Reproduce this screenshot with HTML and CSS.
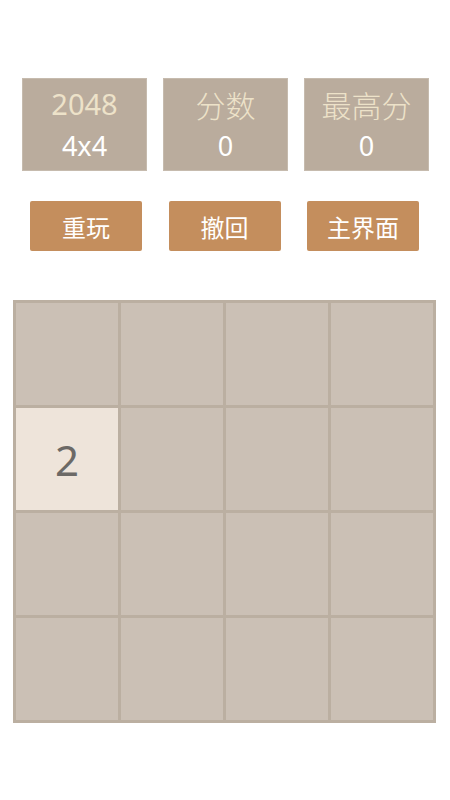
FILE: index.html
```html
<!DOCTYPE html>
<html lang="zh">
<head>
<meta charset="utf-8">
<link rel="stylesheet" href="styles.css">
</head>
<body>
<div class="page">
  <div class="scores">
    <div class="box"><div class="label num">2048</div><div class="value">4x4</div></div>
    <div class="box"><div class="label">分数</div><div class="value">0</div></div>
    <div class="box"><div class="label">最高分</div><div class="value">0</div></div>
  </div>
  <div class="buttons">
    <div class="btn">重玩</div>
    <div class="btn">撤回</div>
    <div class="btn">主界面</div>
  </div>
  <div class="board">
    <div class="cell"></div><div class="cell"></div><div class="cell"></div><div class="cell"></div>
    <div class="cell tile2">2</div><div class="cell"></div><div class="cell"></div><div class="cell"></div>
    <div class="cell"></div><div class="cell"></div><div class="cell"></div><div class="cell"></div>
    <div class="cell"></div><div class="cell"></div><div class="cell"></div><div class="cell"></div>
  </div>
</div>
</body>
</html>
```
FILE: styles.css
```css
html, body {
  margin: 0;
  padding: 0;
  background: #ffffff;
}
.page {
  width: 450px;
  height: 800px;
  display: flex;
  flex-direction: column;
  font-family: "Noto Sans", "Noto Sans CJK SC", sans-serif;
}
.scores {
  margin-top: 78px;
  margin-left: 22px;
  display: flex;
  gap: 16px;
}
.box {
  width: 125px;
  height: 93px;
  box-sizing: border-box;
  background: #baac9d;
  border: 1px solid #c6bbae;
  display: flex;
  flex-direction: column;
  align-items: center;
}
.label {
  color: #ede2c9;
  font-size: 30px;
  line-height: 34px;
  margin-top: 8px;
  font-family: "Noto Sans CJK SC", sans-serif;
  font-weight: 300;
}
.label.num {
  font-family: "Noto Sans", sans-serif;
  font-size: 29px;
  font-weight: 400;
}
.value {
  color: #ffffff;
  font-size: 27px;
  line-height: 30px;
  margin-top: 10px;
  font-family: "Noto Sans", sans-serif;
}
.buttons {
  margin-top: 30px;
  margin-left: 30px;
  display: flex;
  gap: 26.5px;
}
.btn {
  width: 112px;
  height: 50px;
  background: #c48e5d;
  border-radius: 2px;
  color: #ffffff;
  font-family: "Noto Sans CJK SC", sans-serif;
  font-size: 24px;
  display: flex;
  align-items: center;
  justify-content: center;
}
.board {
  margin-top: 49px;
  margin-left: 13px;
  width: 423px;
  height: 423px;
  box-sizing: border-box;
  padding: 3px;
  background: #bbafa1;
  display: grid;
  grid-template-columns: repeat(4, 1fr);
  grid-template-rows: repeat(4, 1fr);
  gap: 3px;
}
.cell {
  background: #cbc0b5;
  display: flex;
  align-items: center;
  justify-content: center;
}
.tile2 {
  background: #eee4da;
  color: #6c6966;
  font-family: "Noto Sans", sans-serif;
  font-size: 42px;
  font-weight: 400;
}
```
